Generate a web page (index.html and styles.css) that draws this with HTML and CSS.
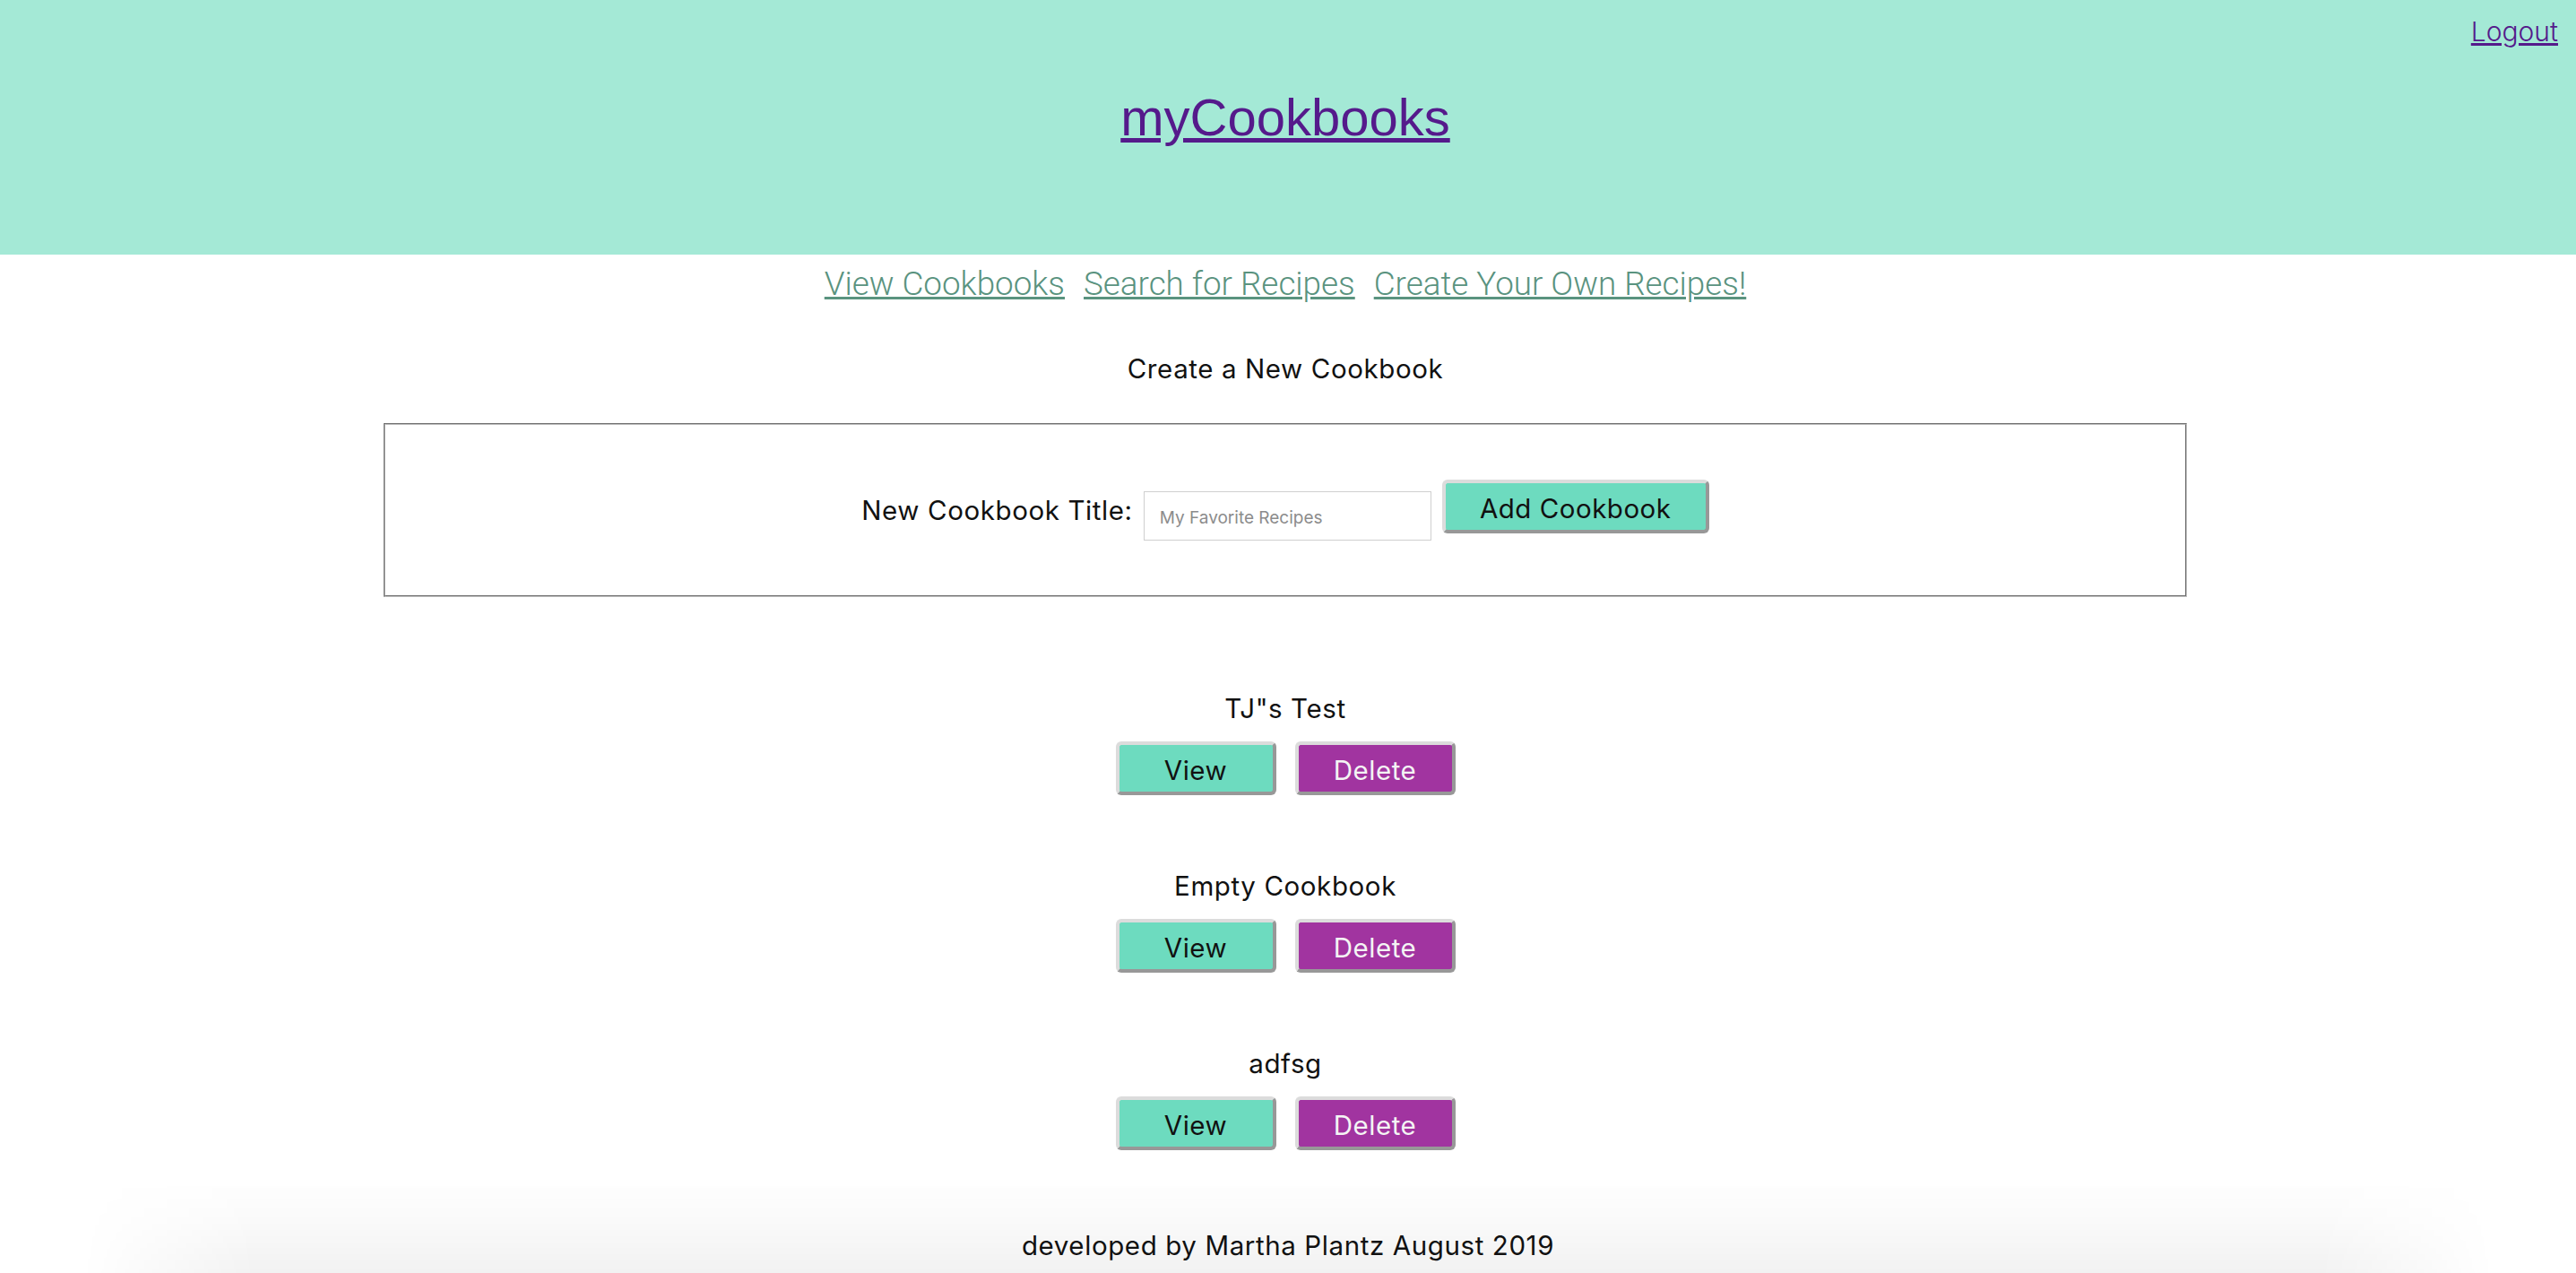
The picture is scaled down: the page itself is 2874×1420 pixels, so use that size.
FILE: index.html
```html
<!DOCTYPE html>
<html>
<head>
<meta charset="utf-8">
<title>myCookbooks</title>
<link rel="stylesheet" href="styles.css">
</head>
<body>
<header class="site-header">
  <div class="logout-row"><a class="logout" href="#">Logout</a></div>
  <h1 class="brand"><a href="#">myCookbooks</a></h1>
</header>
<main class="main">
  <nav class="nav">
    <a href="#">View Cookbooks</a>
    <a href="#">Search for Recipes</a>
    <a href="#">Create Your Own Recipes!</a>
  </nav>
  <h2 class="section-title">Create a New Cookbook</h2>
  <form class="new-form">
    <label class="form-label" for="title">New Cookbook Title:</label>
    <input class="form-input" id="title" type="text" placeholder="My Favorite Recipes">
    <button class="btn btn-green btn-add" type="button">Add Cookbook</button>
  </form>
  <ul class="book-list">
    <li class="book">
      <div class="book-title">TJ"s Test</div>
      <div class="book-actions">
        <button class="btn btn-green btn-fixed" type="button">View</button>
        <button class="btn btn-purple btn-fixed" type="button">Delete</button>
      </div>
    </li>
    <li class="book">
      <div class="book-title">Empty Cookbook</div>
      <div class="book-actions">
        <button class="btn btn-green btn-fixed" type="button">View</button>
        <button class="btn btn-purple btn-fixed" type="button">Delete</button>
      </div>
    </li>
    <li class="book">
      <div class="book-title">adfsg</div>
      <div class="book-actions">
        <button class="btn btn-green btn-fixed" type="button">View</button>
        <button class="btn btn-purple btn-fixed" type="button">Delete</button>
      </div>
    </li>
  </ul>
</main>
<footer class="footer">
  <div class="footer-shade"></div>
  <p class="footer-text">developed by Martha Plantz August 2019</p>
</footer>
</body>
</html>
```
FILE: styles.css
```css
html, body {
  margin: 0;
  padding: 0;
  overflow: hidden;
}
body {
  font-family: Inter, "Liberation Sans", sans-serif;
  color: #111;
  background: #fff;
  height: 1420px;
}
.site-header {
  background: #a4e9d6;
  height: 284px;
  box-sizing: border-box;
  padding-top: 18px;
  padding-right: 6px;
}
.logout-row {
  display: flex;
  justify-content: flex-end;
  padding-right: 14px;
  height: 34px;
}
.logout {
  font-size: 30px;
  line-height: 34px;
  color: #551a8b;
  font-family: Inter, sans-serif;
  font-weight: 300;
}
.brand {
  margin: 44px 0 0;
  text-align: center;
  font-family: "Liberation Sans", Arial, sans-serif;
  font-weight: normal;
  font-size: 58px;
  line-height: 69px;
}
.brand a {
  color: #551a8b;
}
.main {
  padding-right: 6px;
  display: flex;
  flex-direction: column;
  align-items: center;
}
.nav {
  margin-top: 13px;
  display: flex;
  gap: 21px;
  font-family: Roboto, "Liberation Sans", sans-serif;
  font-weight: 300;
  font-size: 36.8px;
  line-height: 40px;
}
.nav a {
  color: #5a937f;
}
.section-title {
  margin: 57px 0 0;
  font-weight: normal;
  font-size: 29.5px;
  letter-spacing: 0.6px;
  line-height: 34px;
}
.new-form {
  margin-top: 44px;
  width: 70%;
  border: 2px groove #c0c0c0;
  padding: 61px 0;
  display: flex;
  justify-content: center;
  align-items: flex-start;
  height: 68px;
}
.form-label {
  font-size: 29.5px;
  letter-spacing: 0.6px;
  line-height: 34px;
  margin-top: 17px;
  margin-right: 12px;
}
.form-input {
  margin-top: 13px;
  width: 321px;
  height: 55px;
  box-sizing: border-box;
  border: 1px solid #cfcfcf;
  padding: 4px 17px 0;
  font-family: Inter, sans-serif;
  font-size: 19px;
  margin-right: 12px;
  outline: none;
}
.form-input::placeholder {
  color: #8c8c8c;
}
.btn {
  font-family: Inter, sans-serif;
  font-size: 29.5px;
  letter-spacing: 0.5px;
  line-height: 34px;
  border-width: 4px;
  border-style: solid;
  border-color: #dcdcdc #989898 #989898 #dcdcdc;
  border-radius: 6px;
  height: 60px;
  box-sizing: border-box;
  padding: 4px 0 0;
  cursor: pointer;
}
.btn-green {
  background: #6ddbbf;
  color: #111;
}
.btn-purple {
  background: #a134a0;
  color: #f4f4f4;
}
.btn-add {
  width: 298px;
}
.btn-fixed {
  width: 179px;
}
.book-list {
  list-style: none;
  margin: 107px 0 0;
  padding: 0;
  display: flex;
  flex-direction: column;
  align-items: center;
  gap: 84px;
}
.book {
  display: flex;
  flex-direction: column;
  align-items: center;
}
.book-title {
  font-size: 29.5px;
  letter-spacing: 0.6px;
  line-height: 34px;
}
.book-actions {
  margin-top: 20px;
  display: flex;
  gap: 21px;
}
.footer {
  position: relative;
  width: 94%;
  margin: 40px auto 0;
  padding: 49px 0 60px;
}
.footer-shade {
  position: absolute;
  inset: 0;
  z-index: -1;
  background: linear-gradient(to bottom, rgba(0, 0, 0, 0) 0%, rgba(0, 0, 0, 0.025) 35%, rgba(0, 0, 0, 0.085) 100%);
  filter: blur(30px);
  -webkit-mask-image: linear-gradient(to right, transparent 0, #000 200px, #000 calc(100% - 200px), transparent 100%);
  mask-image: linear-gradient(to right, transparent 0, #000 200px, #000 calc(100% - 200px), transparent 100%);
}
.footer-text {
  position: relative;
  margin: 0;
  text-align: center;
  font-size: 29.5px;
  letter-spacing: 0.6px;
  line-height: 34px;
}
```
